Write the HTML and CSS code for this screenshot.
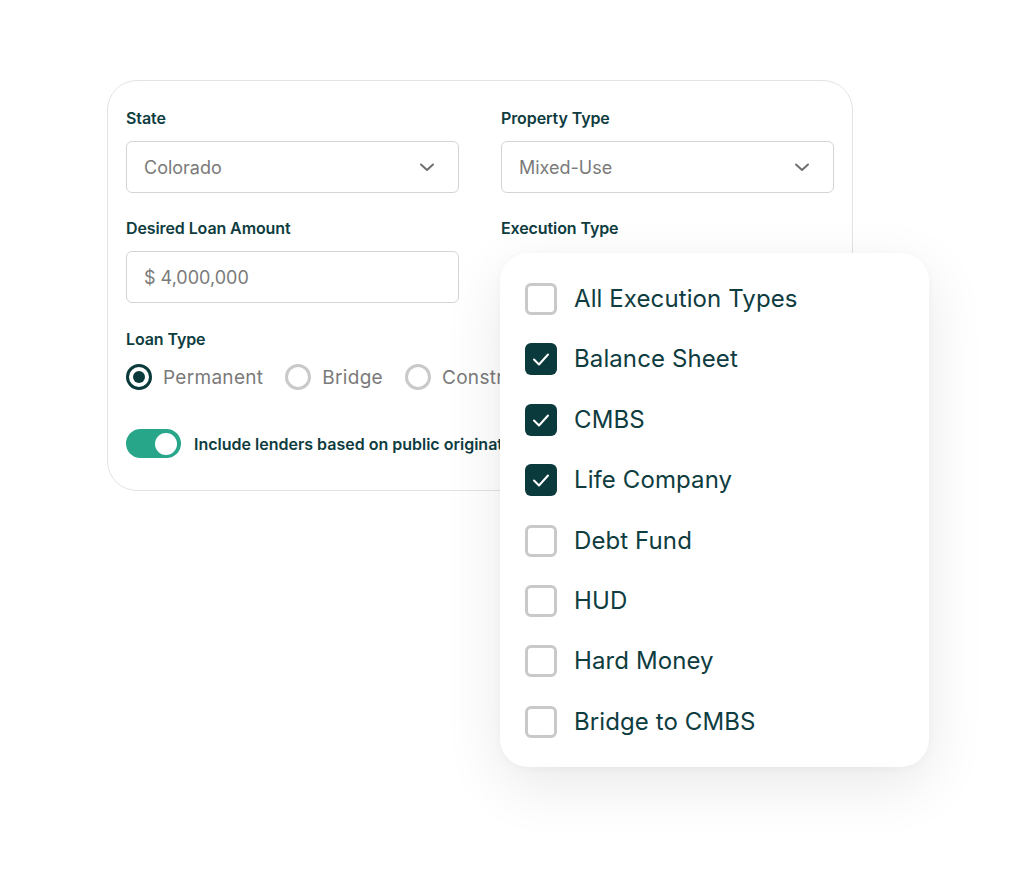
FILE: index.html
```html
<!DOCTYPE html>
<html>
<head>
<meta charset="utf-8">
<link rel="stylesheet" href="styles.css">
</head>
<body>
<div class="stage">
  <div class="card">
    <div class="grid">
      <div class="field">
        <div class="label">State</div>
        <div class="select"><span>Colorado</span><svg class="chev" width="18" height="18" viewBox="0 0 18 18"><path d="M3 6.5 L9 12 L15 6.5" fill="none" stroke="#6f6f6f" stroke-width="2" stroke-linecap="round" stroke-linejoin="round"/></svg></div>
      </div>
      <div class="field">
        <div class="label">Property Type</div>
        <div class="select"><span>Mixed-Use</span><svg class="chev" width="18" height="18" viewBox="0 0 18 18"><path d="M3 6.5 L9 12 L15 6.5" fill="none" stroke="#6f6f6f" stroke-width="2" stroke-linecap="round" stroke-linejoin="round"/></svg></div>
      </div>
      <div class="field">
        <div class="label">Desired Loan Amount</div>
        <div class="select"><span>$ 4,000,000</span></div>
      </div>
      <div class="field">
        <div class="label">Execution Type</div>
      </div>
    </div>
    <div class="label loan-label">Loan Type</div>
    <div class="radios">
      <div class="radio-item"><span class="radio on"></span><span>Permanent</span></div>
      <div class="radio-item"><span class="radio"></span><span>Bridge</span></div>
      <div class="radio-item"><span class="radio"></span><span>Construction</span></div>
    </div>
    <div class="toggle-row">
      <span class="toggle"><span class="knob"></span></span>
      <span class="toggle-label">Include lenders based on public origination data</span>
    </div>
  </div>
  <div class="dropdown">
    <div class="opt"><span class="box"></span><span>All Execution Types</span></div>
    <div class="opt"><span class="box checked"><svg width="32" height="32" viewBox="0 0 32 32"><path d="M9 16.5 L14 21.5 L23 11.5" fill="none" stroke="#fff" stroke-width="2" stroke-linecap="round" stroke-linejoin="round"/></svg></span><span>Balance Sheet</span></div>
    <div class="opt"><span class="box checked"><svg width="32" height="32" viewBox="0 0 32 32"><path d="M9 16.5 L14 21.5 L23 11.5" fill="none" stroke="#fff" stroke-width="2" stroke-linecap="round" stroke-linejoin="round"/></svg></span><span>CMBS</span></div>
    <div class="opt"><span class="box checked"><svg width="32" height="32" viewBox="0 0 32 32"><path d="M9 16.5 L14 21.5 L23 11.5" fill="none" stroke="#fff" stroke-width="2" stroke-linecap="round" stroke-linejoin="round"/></svg></span><span>Life Company</span></div>
    <div class="opt"><span class="box"></span><span>Debt Fund</span></div>
    <div class="opt"><span class="box"></span><span>HUD</span></div>
    <div class="opt"><span class="box"></span><span>Hard Money</span></div>
    <div class="opt"><span class="box"></span><span>Bridge to CMBS</span></div>
  </div>
</div>
</body>
</html>
```

FILE: styles.css
```css
html, body {
  margin: 0;
  padding: 0;
  background: #ffffff;
}
body {
  font-family: Inter, "Liberation Sans", Arial, sans-serif;
  color: #0e3c3f;
  width: 1024px;
  height: 869px;
  overflow: hidden;
}
.stage {
  position: relative;
  padding: 80px 0 0 107px;
}
.card {
  width: 746px;
  height: 411px;
  box-sizing: border-box;
  border: 1.5px solid #e3e3e3;
  border-radius: 30px;
  padding: 28px 19px 0 18px;
  overflow: hidden;
  background: #fff;
}
.grid {
  display: grid;
  grid-template-columns: 333px 333px;
  column-gap: 42px;
  row-gap: 26px;
}
.label {
  font-size: 16px;
  line-height: 18px;
  font-weight: 600;
  color: #0e3c3f;
  letter-spacing: -0.1px;
  white-space: nowrap;
}
.select {
  margin-top: 14px;
  height: 52px;
  box-sizing: border-box;
  border: 1.5px solid #d4d4d4;
  border-radius: 6px;
  display: flex;
  align-items: center;
  justify-content: space-between;
  padding: 0 22px 0 17px;
  font-size: 18px;
  color: #7a7a7a;
}
.chev { display: block; }
.loan-label {
  margin-top: 27px;
}
.radios {
  display: flex;
  align-items: center;
  margin-top: 16px;
  gap: 22px;
  white-space: nowrap;
}
.radio-item {
  display: flex;
  align-items: center;
  gap: 11px;
  font-size: 19px;
  letter-spacing: 0.3px;
  color: #7a7a7a;
}
.radio {
  width: 26px;
  height: 26px;
  box-sizing: border-box;
  border-radius: 50%;
  border: 3px solid #c9c9c9;
  position: relative;
  flex: none;
}
.radio.on {
  border: 3px solid #0b3a3c;
}
.radio.on::after {
  content: "";
  position: absolute;
  left: 4px;
  top: 4px;
  width: 12px;
  height: 12px;
  border-radius: 50%;
  background: #0b3a3c;
}
.toggle-row {
  display: flex;
  align-items: center;
  gap: 13px;
  margin-top: 39px;
  white-space: nowrap;
}
.toggle {
  width: 55px;
  height: 29px;
  border-radius: 15px;
  background: #28a68a;
  position: relative;
  flex: none;
}
.knob {
  position: absolute;
  right: 4px;
  top: 3.5px;
  width: 22px;
  height: 22px;
  border-radius: 50%;
  background: #fff;
}
.toggle-label {
  font-size: 16px;
  font-weight: 600;
  color: #0e3c3f;
}
.dropdown {
  position: absolute;
  left: 500px;
  top: 253px;
  width: 429px;
  height: 514px;
  box-sizing: border-box;
  background: #fff;
  border-radius: 28px;
  box-shadow: 0 18px 60px rgba(0, 0, 0, 0.09), 0 2px 10px rgba(0, 0, 0, 0.03);
  padding: 30px 0 0 25px;
  display: flex;
  flex-direction: column;
  gap: 28.4px;
}
.opt {
  display: flex;
  align-items: center;
  gap: 17px;
  font-size: 24px;
  line-height: 32px;
  color: #0e3c3f;
  white-space: nowrap;
  letter-spacing: 0.1px;
}
.box {
  width: 32px;
  height: 32px;
  box-sizing: border-box;
  border: 3px solid #c9c9c9;
  border-radius: 6px;
  flex: none;
  display: block;
}
.box.checked {
  border: none;
  background: #0b3a3c;
}
.box svg { display: block; }
```
